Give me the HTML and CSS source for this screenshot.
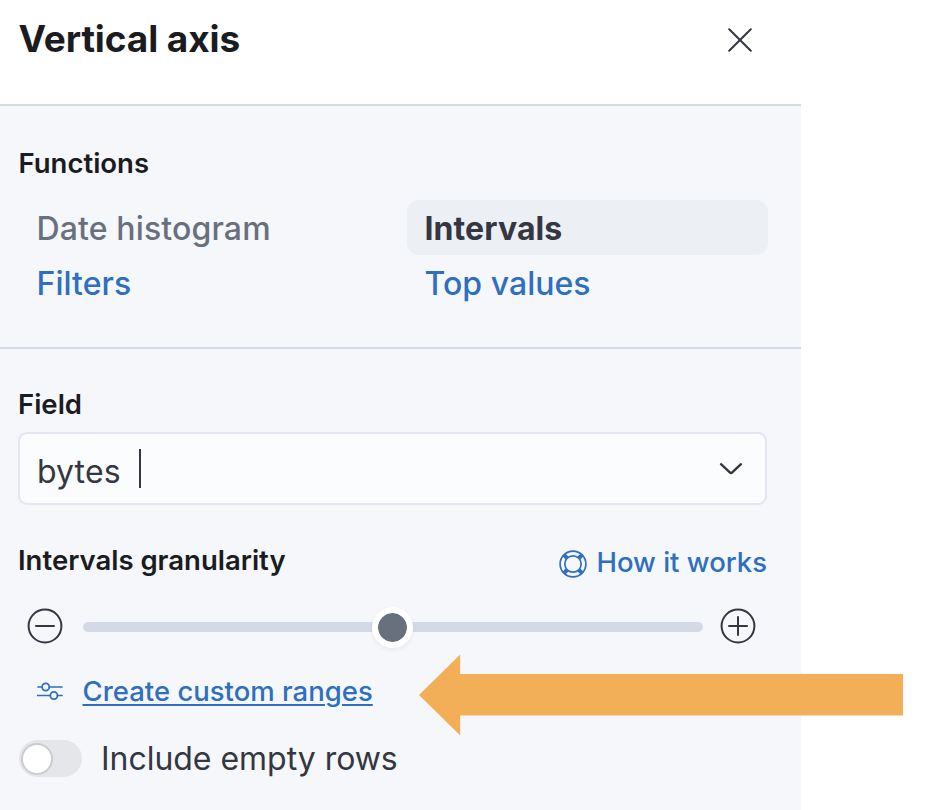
FILE: index.html
```html
<!DOCTYPE html>
<html lang="en">
<head>
<meta charset="utf-8">
<title>Vertical axis</title>
<link rel="stylesheet" href="styles.css">
</head>
<body>
<main class="panel">
  <header class="panel-header">
    <h1 class="title">Vertical axis</h1>
    <button class="close" aria-label="Close">
      <svg width="24" height="24" viewBox="0 0 24 24"><path d="M1.2 1.2 22.8 22.8M22.8 1.2 1.2 22.8"/></svg>
    </button>
  </header>

  <section class="functions">
    <h2 class="label">Functions</h2>
    <div class="function-grid">
      <a class="function is-disabled">Date histogram</a>
      <a class="function is-active">Intervals</a>
      <a class="function">Filters</a>
      <a class="function">Top values</a>
    </div>
  </section>

  <section class="settings">
    <h2 class="label">Field</h2>
    <div class="combo">
      <span class="combo-value">bytes</span>
      <span class="caret"></span>
      <svg class="chevron" width="24" height="14" viewBox="0 0 24 14"><path d="M2 2.2 10.8 10.4Q12 11.5 13.2 10.4L22 2.2"/></svg>
    </div>

    <div class="granularity-head">
      <h2 class="label">Intervals granularity</h2>
      <a class="help">
        <svg class="help-icon" width="28" height="28" viewBox="0 0 28 28">
          <circle cx="14" cy="14" r="12.9"/><circle cx="14" cy="14" r="8.2"/>
          <path class="band" d="M5.2 5.2 8 8M22.8 5.2 20 8M5.2 22.8 8 20M22.8 22.8 20 20"/>
        </svg>
        <span>How it works</span>
      </a>
    </div>

    <div class="slider-row">
      <svg class="round-icon" width="36" height="36" viewBox="0 0 36 36"><circle cx="18" cy="18" r="16.4"/><path d="M9 18H27"/></svg>
      <div class="track"><span class="thumb"></span></div>
      <svg class="round-icon" width="36" height="36" viewBox="0 0 36 36"><circle cx="18" cy="18" r="16.4"/><path d="M9 18H27M18 9V27"/></svg>
    </div>

    <div class="custom-row">
      <svg class="controls-icon" width="26" height="20" viewBox="0 0 26 20">
        <path d="M1 6H5.2M12.2 6H25M.6 14.5H13.4M20.4 14.5H25"/>
        <circle cx="8.7" cy="6" r="3.6"/><circle cx="16.9" cy="14.5" r="3.6"/>
      </svg>
      <a class="custom-link">Create custom ranges</a>
      <svg class="arrow" width="484" height="82" viewBox="0 0 484 82"><path d="M0 41 41.200 .5V20H484V61.500H41.200V81.500Z"/></svg>
    </div>

    <div class="switch-row">
      <span class="switch"><span class="knob"></span></span>
      <span class="switch-label">Include empty rows</span>
    </div>
  </section>
</main>
</body>
</html>
```
FILE: styles.css
```css
* { box-sizing: border-box; }

body {
  margin: 0;
  height: 810px;
  overflow: hidden;
  background: #fff;
  color: #343741;
  font-family: Inter, "Liberation Sans", sans-serif;
}

.panel {
  display: flex;
  flex-direction: column;
  width: 801px;
  height: 810px;
  background: #f5f7fb;
}

.panel-header {
  display: flex;
  justify-content: space-between;
  height: 106px;
  padding: 14px 49.500px 0 18.500px;
  background: #fff;
  border-bottom: 2px solid #d3dae8;
}

.title {
  margin: 0;
  font-size: 37px;
  line-height: 50px;
  font-weight: 700;
  letter-spacing: -.1px;
  color: #1a1c21;
}

.close {
  height: 24px;
  margin-top: 14px;
  padding: 0;
  border: 0;
  background: none;
}

svg { display: block; fill: none; stroke: #343741; stroke-width: 2; stroke-linecap: round; flex: none; }

.label {
  margin: 0;
  font-size: 27.5px;
  line-height: 37px;
  font-weight: 630;
  color: #1a1c21;
}

.functions {
  height: 243px;
  padding: 39px 34px 0 18.500px;
  border-bottom: 2px solid #d3dae8;
}

.function-grid {
  display: grid;
  grid-template-columns: 361px 361px;
  column-gap: 27px;
  margin-top: 18px;
}

.function {
  height: 55px;
  padding-left: 18px;
  border-radius: 12px;
  font-size: 32px;
  line-height: 57px;
  font-weight: 550;
  letter-spacing: .04px;
  color: #2f6fbf;
}

.is-disabled { color: #69707d; letter-spacing: .14px; }
.is-active { background: #eceff4; color: #343741; font-weight: 700; letter-spacing: .1px; }

.settings { padding: 37px 34px 0 18px; }

.combo {
  display: flex;
  width: 749px;
  height: 73px;
  margin-top: 9px;
  padding: 0 22.500px 0 17px;
  background: #fbfcfe;
  border: 2px solid #e3e5f0;
  border-radius: 9px;
}

.combo-value { font-size: 32px; line-height: 75px; letter-spacing: .1px; }
.caret { width: 2px; height: 39px; margin: 15px 0 0 18.500px; background: #343741; }
.chevron { margin: 28px 0 0 auto; stroke-width: 2.4; }

.granularity-head { display: flex; justify-content: space-between; height: 36px; margin-top: 37px; }

.help {
  display: flex;
  gap: 9.500px;
  margin-top: 2px;
  font-size: 27.5px;
  line-height: 37px;
  font-weight: 540;
  color: #2f6fbf;
}

.help-icon { margin-top: 6px; stroke: #2f6fbf; stroke-width: 1.7; }
.band { stroke-width: 4; stroke-linecap: butt; }

.slider-row { display: flex; align-items: center; height: 36px; margin: 30px 11px 0 9px; }

.track {
  position: relative;
  flex: 1;
  height: 10px;
  margin: 2px 17px 0 19.5px;
  background: #d3dae6;
  border-radius: 5px;
}

.thumb {
  position: absolute;
  left: 50%;
  top: 50%;
  width: 41px;
  height: 41px;
  margin: -20.5px 0 0 -21px;
  border: 6.5px solid #fff;
  border-radius: 50%;
  background: #69707d;
  background-clip: padding-box;
  box-shadow: 0 2px 4px rgba(60, 70, 90, .08);
}

.custom-row { position: relative; display: flex; height: 36px; margin: 29px 0 0 20px; }
.controls-icon { margin-top: 8px; margin-left: -1px; stroke: #2f6fbf; stroke-width: 1.7; }

.custom-link {
  margin-left: 19.500px;
  font-size: 27.5px;
  line-height: 37px;
  font-weight: 540;
  color: #2f6fbf;
  text-decoration: underline;
  text-decoration-thickness: 2px;
  text-underline-offset: 3px;
}

.arrow { position: absolute; left: 381px; top: -19px; fill: #f3af57; stroke: none; }

.switch-row { display: flex; margin-top: 31px; }

.switch { width: 63px; height: 37px; margin-left: 1px; padding: 2.500px 2px; border-radius: 19px; background: #e4e6ea; }
.knob { display: block; width: 32px; height: 32px; border: 2px solid #ccccce; border-radius: 50%; background: #fff; }
.switch-label { margin-left: 19px; font-size: 32px; line-height: 38px; letter-spacing: -.03px; }
```
